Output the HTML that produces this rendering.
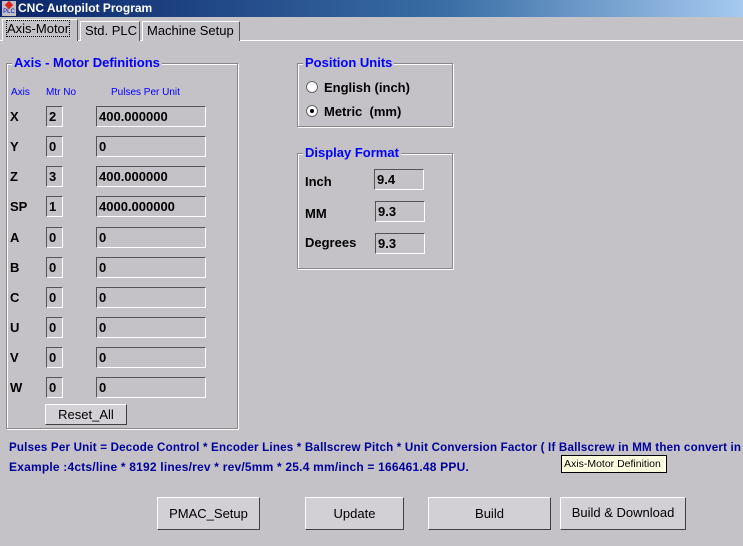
<!DOCTYPE html>
<html><head><style>
*{box-sizing:border-box;margin:0;padding:0}
body{width:743px;height:546px;background:#c4c2c7;font-family:"Liberation Sans",sans-serif;position:relative;overflow:hidden}
.a{position:absolute}
.title{left:0;top:0;width:743px;height:17px;background:linear-gradient(90deg,#0a246a,#3a6ea5 60%,#a6caf0);color:#fff;font-weight:bold;font-size:12px;line-height:17px;padding-left:18px}
.tab{top:21px;height:20px;border:1px solid #fff;border-right-color:#555;border-bottom:none;font-size:13px;line-height:18px;padding:0 4px;background:#c4c2c7;white-space:nowrap}
.grp{border:1px solid #888;box-shadow:1px 1px 0 #fff,inset 1px 1px 0 #fff}
.gt{font-weight:bold;color:#0000ff;font-size:13px;background:#c4c2c7;padding:0 2px}
.lbl{font-size:13px;font-weight:bold;color:#000}
.box{height:21px;border:1px solid;border-color:#555 #fff #fff #555;font-size:13px;font-weight:bold;line-height:19px;padding-left:2px;background:#c4c2c7}
.btn{top:497px;height:33px;border:1px solid;border-color:#fff #404040 #404040 #fff;background:#d2d0d4;font-size:13px;text-align:center;line-height:31px}
.small{font-size:10px;color:#0000ff}
.blue{color:#00009c;font-weight:bold;font-size:12px;white-space:nowrap;letter-spacing:0.2px}
</style></head><body>
<div class="a title">CNC Autopilot Program</div>
<div class="a" style="left:2px;top:1px;width:14px;height:15px;background:#c0c0c0;font-size:6px;color:#00c;line-height:22px;text-align:center">PLC<div class="a" style="left:4px;top:1px;width:6px;height:6px;background:#d22;transform:rotate(45deg)"></div></div>
<div class="a" style="left:0;top:40px;width:743px;height:1px;background:#fff"></div>
<div class="a tab" style="left:2px;top:19px;height:22px;width:76px"><span style="outline:1px dotted #000">Axis-Motor</span></div>
<div class="a tab" style="left:80px;width:60px">Std. PLC</div>
<div class="a tab" style="left:142px;width:98px">Machine Setup</div>

<div class="a grp" style="left:6px;top:63px;width:232px;height:366px"></div>
<div class="a gt" style="left:12px;top:55px">Axis - Motor Definitions</div>
<div class="a small" style="left:11px;top:87px">Axis</div>
<div class="a small" style="left:46px;top:87px">Mtr No</div>
<div class="a small" style="left:111px;top:87px">Pulses Per Unit</div>

<div class="a lbl" style="left:10px;top:109px">X</div><div class="a box" style="left:46px;top:106px;width:17px">2</div><div class="a box" style="left:96px;top:106px;width:110px">400.000000</div>
<div class="a lbl" style="left:10px;top:139px">Y</div><div class="a box" style="left:46px;top:136px;width:17px">0</div><div class="a box" style="left:96px;top:136px;width:110px">0</div>
<div class="a lbl" style="left:10px;top:169px">Z</div><div class="a box" style="left:46px;top:166px;width:17px">3</div><div class="a box" style="left:96px;top:166px;width:110px">400.000000</div>
<div class="a lbl" style="left:10px;top:199px">SP</div><div class="a box" style="left:46px;top:196px;width:17px">1</div><div class="a box" style="left:96px;top:196px;width:110px">4000.000000</div>
<div class="a lbl" style="left:10px;top:230px">A</div><div class="a box" style="left:46px;top:227px;width:17px">0</div><div class="a box" style="left:96px;top:227px;width:110px">0</div>
<div class="a lbl" style="left:10px;top:260px">B</div><div class="a box" style="left:46px;top:257px;width:17px">0</div><div class="a box" style="left:96px;top:257px;width:110px">0</div>
<div class="a lbl" style="left:10px;top:290px">C</div><div class="a box" style="left:46px;top:287px;width:17px">0</div><div class="a box" style="left:96px;top:287px;width:110px">0</div>
<div class="a lbl" style="left:10px;top:320px">U</div><div class="a box" style="left:46px;top:317px;width:17px">0</div><div class="a box" style="left:96px;top:317px;width:110px">0</div>
<div class="a lbl" style="left:10px;top:350px">V</div><div class="a box" style="left:46px;top:347px;width:17px">0</div><div class="a box" style="left:96px;top:347px;width:110px">0</div>
<div class="a lbl" style="left:10px;top:380px">W</div><div class="a box" style="left:46px;top:377px;width:17px">0</div><div class="a box" style="left:96px;top:377px;width:110px">0</div>
<div class="a btn" style="left:45px;top:404px;width:82px;height:21px;line-height:19px;font-size:13px">Reset_All</div>

<div class="a grp" style="left:297px;top:63px;width:156px;height:64px"></div>
<div class="a gt" style="left:303px;top:55px">Position Units</div>
<div class="a" style="left:306px;top:81px;width:12px;height:12px;border-radius:50%;background:#fff;border:1px solid #666"></div>
<div class="a lbl" style="left:324px;top:80px">English (inch)</div>
<div class="a" style="left:306px;top:105px;width:12px;height:12px;border-radius:50%;background:#fff;border:1px solid #666"><div class="a" style="left:3px;top:3px;width:4px;height:4px;border-radius:50%;background:#000"></div></div>
<div class="a lbl" style="left:324px;top:104px">Metric&nbsp; (mm)</div>

<div class="a grp" style="left:297px;top:153px;width:156px;height:116px"></div>
<div class="a gt" style="left:303px;top:145px">Display Format</div>
<div class="a lbl" style="left:305px;top:174px">Inch</div><div class="a box" style="left:374px;top:169px;width:50px">9.4</div>
<div class="a lbl" style="left:305px;top:206px">MM</div><div class="a box" style="left:375px;top:201px;width:50px">9.3</div>
<div class="a lbl" style="left:305px;top:235px">Degrees</div><div class="a box" style="left:375px;top:233px;width:50px">9.3</div>

<div class="a blue" style="left:9px;top:440px;transform:scaleX(0.965);transform-origin:0 0">Pulses Per Unit = Decode Control * Encoder Lines * Ballscrew Pitch * Unit Conversion Factor ( If Ballscrew in MM then convert in</div>
<div class="a blue" style="left:9px;top:460px">Example :4cts/line * 8192 lines/rev * rev/5mm * 25.4 mm/inch = 166461.48 PPU.</div>
<div class="a" style="left:561px;top:455px;width:106px;height:18px;background:#ffffe1;border:1px solid #000;font-size:10.5px;line-height:16px;padding-left:2px;white-space:nowrap">Axis-Motor Definition</div>

<div class="a btn" style="left:157px;width:103px">PMAC_Setup</div>
<div class="a btn" style="left:305px;width:99px">Update</div>
<div class="a btn" style="left:428px;width:123px">Build</div>
<div class="a btn" style="left:560px;width:126px;line-height:29px">Build &amp; Download</div>
</body></html>
